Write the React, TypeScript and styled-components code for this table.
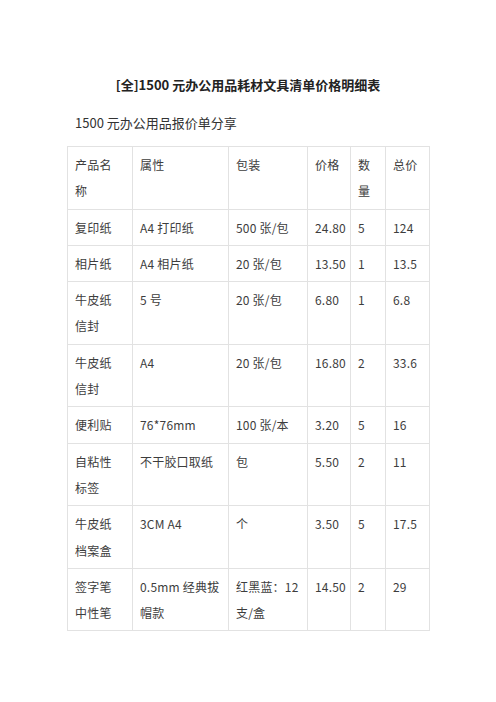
import React from 'react';
import styled, { createGlobalStyle } from 'styled-components';

type Row = string[][];

const columns = [65, 96, 79, 43, 35, 44];

const header: Row = [['产品名', '称'], ['属性'], ['包装'], ['价格'], ['数', '量'], ['总价']];

const rows: Row[] = [
  [['复印纸'], ['A4 打印纸'], ['500 张/包'], ['24.80'], ['5'], ['124']],
  [['相片纸'], ['A4 相片纸'], ['20 张/包'], ['13.50'], ['1'], ['13.5']],
  [['牛皮纸', '信封'], ['5 号'], ['20 张/包'], ['6.80'], ['1'], ['6.8']],
  [['牛皮纸', '信封'], ['A4'], ['20 张/包'], ['16.80'], ['2'], ['33.6']],
  [['便利贴'], ['76*76mm'], ['100 张/本'], ['3.20'], ['5'], ['16']],
  [['自粘性', '标签'], ['不干胶口取纸'], ['包'], ['5.50'], ['2'], ['11']],
  [['牛皮纸', '档案盒'], ['3CM A4'], ['个'], ['3.50'], ['5'], ['17.5']],
  [['签字笔', '中性笔'], ['0.5mm 经典拔', '帽款'], ['红黑蓝：12', '支/盒'], ['14.50'], ['2'], ['29']],
];

const renderCell = (lines: string[]) =>
  lines.map((line, i) => (
    <React.Fragment key={i}>
      {i > 0 && <br />}
      {line}
    </React.Fragment>
  ));

const App = () => {
  return (
    <>
      <GlobalStyle />
      <Page>
        <Title>[全]1500 元办公用品耗材文具清单价格明细表</Title>
        <Subtitle>1500 元办公用品报价单分享</Subtitle>
        <PriceTable>
          <colgroup>
            {columns.map((w, i) => (
              <col key={i} style={{ width: w }} />
            ))}
          </colgroup>
          <tbody>
            <tr>
              {header.map((cell, i) => (
                <Cell key={i}>{renderCell(cell)}</Cell>
              ))}
            </tr>
            {rows.map((row, r) => (
              <tr key={r}>
                {row.map((cell, i) => (
                  <Cell key={i}>{renderCell(cell)}</Cell>
                ))}
              </tr>
            ))}
          </tbody>
        </PriceTable>
      </Page>
    </>
  );
};

export default App;

const GlobalStyle = createGlobalStyle`
  html, body {
    margin: 0;
    padding: 0;
    background: #ffffff;
  }

  body {
    font-family: 'Noto Sans CJK SC', 'Noto Sans', sans-serif;
    color: #333333;
  }
`;

const Page = styled.div`
  width: 362px;
  margin: 0 auto;
  padding-top: 75px;
  display: flex;
  flex-direction: column;
`;

const Title = styled.h1`
  margin: 0;
  font-size: 13px;
  font-weight: 700;
  line-height: 20px;
  text-align: center;
  color: #222222;
`;

const Subtitle = styled.h2`
  margin: 18px 0 0;
  padding-left: 8px;
  font-size: 13px;
  font-weight: 400;
  line-height: 20px;
  color: #333333;
`;

const PriceTable = styled.table`
  margin-top: 13px;
  width: 362px;
  table-layout: fixed;
  border-collapse: collapse;
`;

const Cell = styled.td`
  border: 1px solid #e2e2e2;
  padding: 5px 6px 4px 7px;
  vertical-align: top;
  white-space: nowrap;
  font-size: 12px;
  letter-spacing: 0.2px;
  line-height: 26.3px;
  color: #3d3d3d;
`;
